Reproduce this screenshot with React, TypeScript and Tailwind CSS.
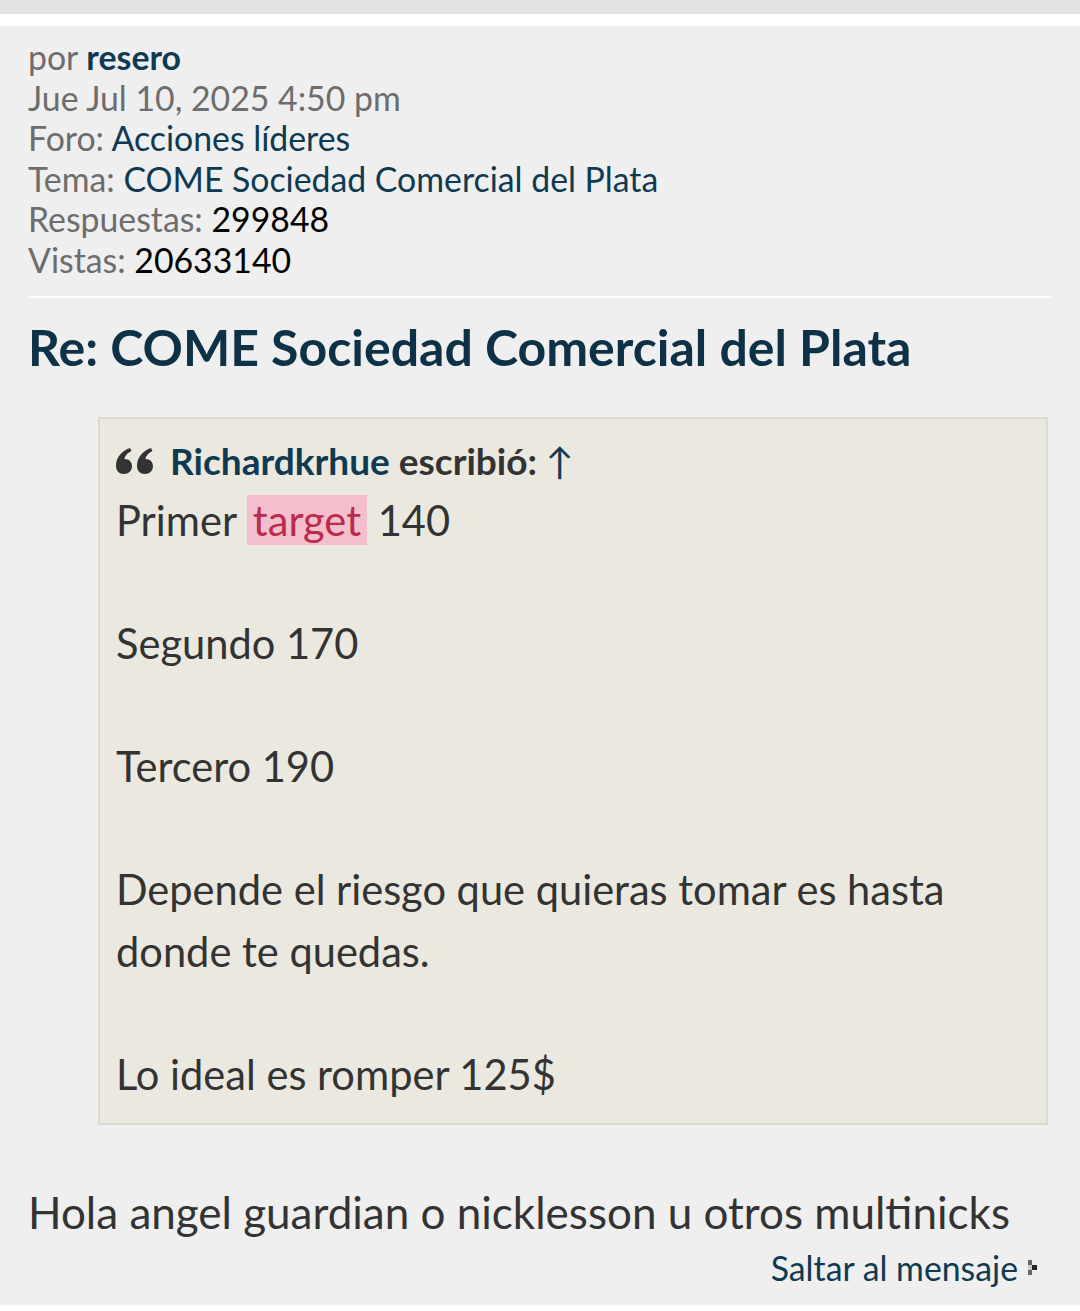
import React from 'react';

const QuoteIcon = () => (
  <svg width="38" height="26" viewBox="0 0 38 26" className="shrink-0">
    <path
      d="M8 26 C3 26 0 22.5 0 18 C0 10 5 3 14 0 L15.5 3 C10.5 5.5 8.5 9 8.5 11 C13 11 16 13.8 16 18.3 C16 22.8 12.5 26 8 26 Z"
      fill="#333"
    />
    <path
      d="M29 26 C24 26 21 22.5 21 18 C21 10 26 3 35 0 L36.5 3 C31.5 5.5 29.5 9 29.5 11 C34 11 37 13.8 37 18.3 C37 22.8 33.5 26 29 26 Z"
      fill="#333"
    />
  </svg>
);

const JumpIcon = () => (
  <svg width="10" height="15" viewBox="0 0 10 15" className="ml-[10px]">
    <rect x="0" y="0" width="4" height="5" fill="#666" />
    <rect x="4" y="5" width="5" height="5" fill="#222" />
    <rect x="0" y="10" width="4" height="5" fill="#666" />
    <rect x="0" y="5" width="4" height="5" fill="#c8c8c8" />
  </svg>
);

export default function App() {
  const link = 'text-[#0e3a52]';
  return (
    <div className="w-[1080px] h-[1311px] bg-white font-['Lato','Liberation_Sans',sans-serif] flex flex-col">
      <div className="h-[14px] bg-[#e3e3e3]" />
      <div className="h-[12px] bg-white" />
      <div className="h-[1279px] bg-[#efefef] px-[28px] pt-[11px] flex flex-col">
        <div className="text-[33.8px] leading-[40.5px] text-[#6d6d6d]">
          <div>
            por <span className={`${link} font-bold`}>resero</span>
          </div>
          <div>Jue Jul 10, 2025 4:50 pm</div>
          <div>
            Foro: <span className={link}>Acciones líderes</span>
          </div>
          <div>
            Tema: <span className={link}>COME Sociedad Comercial del Plata</span>
          </div>
          <div>
            Respuestas: <span className="text-black">299848</span>
          </div>
          <div>
            Vistas: <span className="text-black">20633140</span>
          </div>
        </div>

        <div className="mt-[16px] h-[2px] bg-white" />

        <h2 className="mt-[20px] text-[50px] leading-[58px] font-bold text-[#0d3146]">
          Re: COME Sociedad Comercial del Plata
        </h2>

        <div className="mt-[41px] ml-[70px] mr-[4px] bg-[#ebe9df] border-2 border-[#dbdbce] pl-[16px] pr-[16px] pt-[20px] pb-[18px]">
          <div className="flex items-center gap-[16px] text-[37px] leading-[44px] font-bold text-[#333]">
            <QuoteIcon />
            <span>
              <span className={link}>Richardkrhue</span> escribió:{' '}
              <span className={`${link} font-normal`}>↑</span>
            </span>
          </div>
          <div className="mt-[7px] text-[41.6px] leading-[61.5px] text-[#333]">
            <div>
              Primer <span className="bg-[#f3bfcc] text-[#bc2a4d] px-[6px]">target</span> 140
            </div>
            <div className="h-[61.5px]" />
            <div>Segundo 170</div>
            <div className="h-[61.5px]" />
            <div>Tercero 190</div>
            <div className="h-[61.5px]" />
            <div>Depende el riesgo que quieras tomar es hasta donde te quedas.</div>
            <div className="h-[61.5px]" />
            <div>Lo ideal es romper 125$</div>
          </div>
        </div>

        <div className="mt-[57px] text-[44px] leading-[61.5px] text-[#333]">
          Hola angel guardian o nicklesson u otros multinicks
        </div>

        <div className="mt-[2px] flex items-center justify-end pr-[14px] text-[33.8px] leading-[44px]">
          <span className={link}>Saltar al mensaje</span>
          <JumpIcon />
        </div>
      </div>
      <div className="flex-1 bg-white" />
    </div>
  );
}
